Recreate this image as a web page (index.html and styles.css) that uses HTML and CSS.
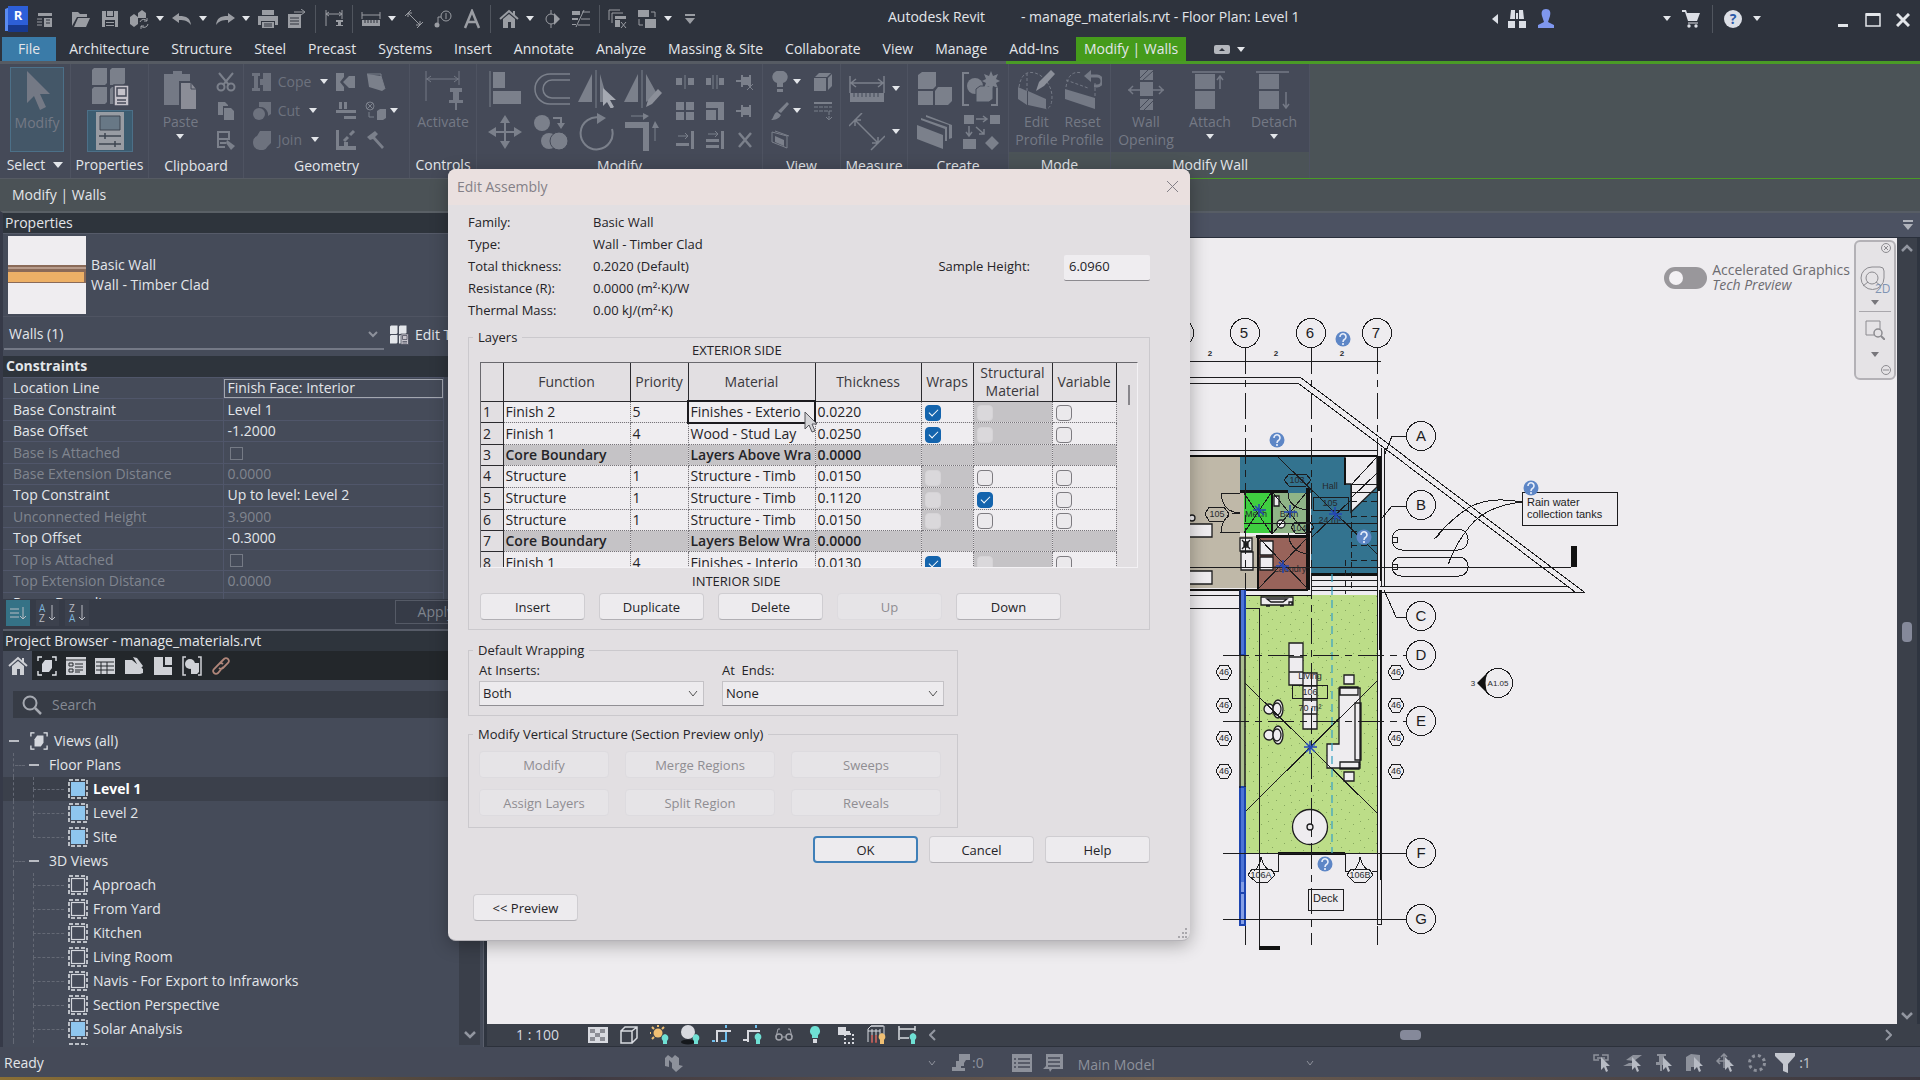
FILE: index.html
```html
<!DOCTYPE html>
<html lang="en">
<head>
    <meta charset="UTF-8">
    <meta name="viewport" content="width=device-width, initial-scale=1.0">
    <title>Autodesk Revit - manage_materials.rvt</title>
    <link rel="stylesheet" href="styles.css">
</head>
<body>
    <!-- Shared icons -->
    <svg class="defs" aria-hidden="true">
        <symbol id="view-on" viewBox="0 0 20 20"><rect x="3" y="3" width="14" height="14" fill="#8fc6ee"/><rect x="1" y="1" width="18" height="18" fill="none" stroke="#e4e7ec" stroke-width="1.5" stroke-dasharray="4 2"/></symbol>
        <symbol id="view-off" viewBox="0 0 20 20"><rect x="3.5" y="3.5" width="13" height="13" fill="none" stroke="#d4d7dd" stroke-width="1.2"/><rect x="1" y="1" width="18" height="18" fill="none" stroke="#e4e7ec" stroke-width="1.5" stroke-dasharray="4 2"/></symbol>
        <symbol id="views" viewBox="0 0 20 20"><path d="M1 5V1h4M15 1h4v4M19 15v4h-4M5 19H1v-4" fill="none" stroke="#e4e7ec" stroke-width="1.4"/><path d="M5 8l3-4h7v8l-3 4H5z" fill="#d4d7dd"/></symbol>
        <symbol id="house" viewBox="0 0 20 20"><path d="M1 10L10 2l9 8M15 6V2" fill="none" stroke="currentColor" stroke-width="2"/><path d="M4 10l6-5 6 5v9h-4v-6H9v6H4z" fill="currentColor"/></symbol>
        <symbol id="types" viewBox="0 0 40 40"><path d="M2 3l2-2h13v15l-2 2H2zM20 3l2-2h13v15l-2 2H20zM2 22l2-2h13v15l-2 2H2zM20 22l2-2h12v17H20z" fill="currentColor"/><rect x="24" y="18" width="15" height="21" fill="#c5c2ca" stroke="#454a58" stroke-width="1.5"/><path d="M27 21h9v8h-9zM27 33h9M27 36h9" stroke="#454a58" stroke-width="1.5" fill="none"/></symbol>
        <symbol id="q" viewBox="0 0 16 16"><circle cx="8" cy="8" r="7.5" fill="#5d86c6"/><path d="M5 6a3 3 0 115 2q-2 1-2 3M8 12v2" fill="none" stroke="#e8eefa" stroke-width="1.6"/></symbol>
        <symbol id="pick" viewBox="0 0 20 20"><path d="M9 4v13l3-3 2 5 2-1-2-5h4z" fill="#b7bbc4"/></symbol>
    </svg>

    <header class="titlebar">
        <svg class="logo" width="23" height="26" viewBox="0 0 23 26"><path d="M0 3l5-2v24H0z" fill="#5a8bf0"/><path d="M3 0h20v19H3z" fill="#2d5fd8"/><path d="M3 19h20v7H3z" fill="#17398f"/><text x="13" y="14" text-anchor="middle" font-size="13" font-weight="bold" fill="#fff">R</text></svg>
        <div class="quick">
            <button class="qb" aria-label="Home"><svg width="18" height="18" viewBox="0 0 18 18"><path d="M2 3h14v3H2zM8 8h8v9H8z"/><path class="ln" d="M1 9h5M1 12h5M1 15h5"/><path d="M10 10h4M10 13h4" stroke="#2e333d"/></svg></button>
            <button class="qb first" aria-label="Open"><svg width="20" height="18" viewBox="0 0 20 18"><path d="M1 2h6l2 2h7v3H6L1 16zM7 8h12l-4 9H3z"/></svg></button>
            <button class="qb" aria-label="Save"><svg width="18" height="18" viewBox="0 0 18 18"><path d="M1 1h16v16H1z"/><path d="M5 1h8v6H5zM4 10h10v7H4z" fill="#2e333d"/><path d="M6 1h6v5H6zM5 12h8v1H5zM5 15h8v1H5z"/></svg></button>
            <button class="qb" aria-label="Synchronize"><svg width="20" height="20" viewBox="0 0 20 20"><path d="M1 8l4-3 4 3v7l-4 3-4-3zM9 4l4-3 4 3v5H9z"/><path class="ln" d="M11 13a4 4 0 017-1M19 15a4 4 0 01-7 2M18 9v3h-3M12 20v-3h3"/></svg></button>
            <button class="caret" aria-label="Synchronize options"></button>
            <button class="qb" aria-label="Undo"><svg width="20" height="14" viewBox="0 0 20 14"><path d="M0 6l7-5v3c8 0 11 2 12 9-3-4-6-5-12-5v3z"/></svg></button>
            <button class="caret" aria-label="Undo list"></button>
            <button class="qb" aria-label="Redo"><svg width="20" height="14" viewBox="0 0 20 14"><path d="M20 6l-7-5v3C5 4 2 6 1 13c3-4 6-5 12-5v3z"/></svg></button>
            <button class="caret" aria-label="Redo list"></button>
            <button class="qb" aria-label="Print"><svg width="20" height="20" viewBox="0 0 20 20"><path d="M4 1h12v5H4zM0 7h20v9h-3v-4H3v4H0zM4 13h12v6H4z"/><path d="M6 15h8M6 17h8" stroke="#2e333d"/></svg></button>
            <button class="qb" aria-label="PDF"><svg width="20" height="20" viewBox="0 0 20 20"><path d="M1 5h13v14H1z"/><path d="M3 9h9M3 12h9M3 15h9" stroke="#2e333d"/><path class="ln" d="M7 3h10M14 0l4 3-4 3"/></svg></button>
            <span class="sep"></span>
            <button class="qb" aria-label="Reveal constraints"><svg width="20" height="20" viewBox="0 0 20 20"><path class="ln" d="M2 1v16M18 1v9M2 5h16M5 3L2 5l3 2M15 3l3 2-3 2"/><path d="M12 11h7v2h-2v3h2v1h-7v-1h2v-3h-2z"/></svg></button>
            <span class="sep"></span>
            <button class="qb" aria-label="Measure"><svg width="20" height="16" viewBox="0 0 20 16"><path class="ln" d="M1 1v7M19 1v7M1 4h18"/><path d="M1 9h18v6H1z"/><path d="M4 9v3M7 9v3M10 9v3M13 9v3M16 9v3" stroke="#2e333d"/></svg></button>
            <button class="caret" aria-label="Measure options"></button>
            <button class="qb" aria-label="Aligned dimension"><svg width="20" height="20" viewBox="0 0 20 20"><path class="ln" d="M1 7l6-6M13 19l6-6M4 4l12 12M4 8V4h4M16 12v4h-4"/></svg></button>
            <button class="qb" aria-label="Tag"><svg width="18" height="18" viewBox="0 0 18 18"><circle class="ln" cx="12" cy="6" r="5"/><path class="ln" d="M7 7H4v6M12 3v6"/><circle cx="3" cy="15" r="2.5"/></svg></button>
            <button class="qb" aria-label="Text"><svg width="18" height="20" viewBox="0 0 18 20"><path class="ln" stroke-width="2.5" d="M2 19L9 2l7 17M5 13h8"/></svg></button>
            <span class="sep"></span>
            <button class="qb" aria-label="Default 3D view"><svg width="20" height="20"><use href="#house"/></svg></button>
            <button class="caret" aria-label="3D options"></button>
            <button class="qb" aria-label="Section"><svg width="18" height="20" viewBox="0 0 18 20"><circle class="ln" cx="8" cy="10" r="5"/><path class="ln" d="M8 1v4M8 15v4"/><path d="M11 4l6 6-6 6z"/></svg></button>
            <button class="qb" aria-label="Thin lines"><svg width="20" height="18" viewBox="0 0 20 18"><path d="M1 1h8v4H1zM1 8h6v2H1zM1 14h4v1H1z"/><path class="ln" d="M11 2h8M10 9h9M7 15h12M13 0L5 17"/></svg></button>
            <span class="sep"></span>
            <button class="qb" aria-label="Close inactive"><svg width="20" height="20" viewBox="0 0 20 20"><path class="ln" d="M1 11V1h11M4 14V4h11"/><path d="M7 7h11v3H7zM7 11h5v7H7z"/><path class="ln" d="M13 13l5 6M18 13l-5 6"/></svg></button>
            <button class="qb" aria-label="Switch windows"><svg width="20" height="20" viewBox="0 0 20 20"><path d="M1 1h11v7H1zM8 10h11v9H8z"/><path class="ln" d="M14 3h4v5M2 10v6h4"/></svg></button>
            <button class="caret" aria-label="Windows list"></button>
            <button class="qb custom" aria-label="Customize"><svg width="10" height="10" viewBox="0 0 10 10"><path d="M0 0h10v2H0zM0 4h10L5 10z"/></svg></button>
        </div>
        <div class="window-title"><span>Autodesk Revit</span><span>- manage_materials.rvt - Floor Plan: Level 1</span></div>
        <div class="account">
            <button aria-label="Collapse search"><svg width="6" height="10" viewBox="0 0 6 10"><path d="M6 0v10L0 5z"/></svg></button>
            <button class="binoculars" aria-label="Search"><svg width="18" height="18" viewBox="0 0 18 18"><path d="M3 0h4v9H2zM11 0h4l1 9h-5zM0 11h7v7H0zM11 11h7v7h-7zM8 3h2v6H8z"/></svg></button>
            <button class="user" aria-label="Sign in"><svg width="18" height="20" viewBox="0 0 18 20"><path d="M9 0c4 0 5 3 4 7l-2 6 6 3v3H1v-3l6-3-2-6C4 3 5 0 9 0z"/></svg></button>
            <button class="caret" aria-label="Account"></button>
            <button class="cart" aria-label="App store"><svg width="18" height="18" viewBox="0 0 18 18"><path d="M0 0h4l1 3h13l-3 8H6L3 2H0z"/><path class="ln" d="M6 13h10"/><circle cx="7" cy="16" r="1.7"/><circle cx="14" cy="16" r="1.7"/></svg></button>
            <span class="sep"></span>
            <button class="help" aria-label="Help"><svg width="18" height="18" viewBox="0 0 18 18"><circle cx="9" cy="9" r="9"/><text x="9" y="14" text-anchor="middle" font-size="14" font-weight="bold" fill="#2d5aa8">?</text></svg></button>
            <button class="caret" aria-label="Help options"></button>
        </div>
        <div class="window-buttons">
            <button aria-label="Minimize"><svg width="14" height="14" viewBox="0 0 14 14"><path d="M2 11h10v3H2z"/></svg></button>
            <button aria-label="Maximize"><svg width="16" height="14" viewBox="0 0 16 14"><path class="ln" stroke-width="1.5" d="M1 1h14v12H1z"/><path d="M1 0h14v3H1z"/></svg></button>
            <button aria-label="Close"><svg width="14" height="14" viewBox="0 0 14 14"><path class="ln" stroke-width="3" d="M1 1l12 12M13 1L1 13"/></svg></button>
        </div>
    </header>

    <nav class="tabs">
        <a href="#" class="file">File</a>
        <a href="#">Architecture</a>
        <a href="#">Structure</a>
        <a href="#">Steel</a>
        <a href="#">Precast</a>
        <a href="#">Systems</a>
        <a href="#">Insert</a>
        <a href="#">Annotate</a>
        <a href="#">Analyze</a>
        <a href="#">Massing &amp; Site</a>
        <a href="#">Collaborate</a>
        <a href="#">View</a>
        <a href="#">Manage</a>
        <a href="#">Add-Ins</a>
        <a href="#" class="active">Modify | Walls</a>
        <button class="minimize" aria-label="Minimize ribbon"><svg width="16" height="9" viewBox="0 0 16 9"><rect width="16" height="9" rx="2"/><path d="M5 6h6L8 3z" fill="#2e333d"/></svg></button>
        <button class="caret" aria-label="Ribbon options"></button>
    </nav>

    <div class="ribbon">
        <section class="panel p-select">
            <div class="panel-body">
                <button class="big selected"><svg width="40" height="40" viewBox="0 0 40 40"><path d="M10 0v32l7-7 6 14 6-3-6-13h10z"/></svg><span>Modify</span></button>
            </div>
            <h2>Select <i class="tri"></i></h2>
        </section>
        <section class="panel p-props">
            <div class="panel-body stack">
                <button aria-label="Type properties"><svg width="40" height="40"><use href="#types"/></svg></button>
                <button class="lit" aria-label="Properties"><svg width="30" height="38" viewBox="0 0 30 38"><path d="M1 0h28v38H1z" fill="#989ca3"/><path d="M5 4h20v14H5z" fill="#687886" stroke="#3c4450"/><path d="M4 24h22M4 32h22M10 21v6M20 29v6" stroke="#3c4450" stroke-width="1.5"/></svg></button>
            </div>
            <h2>Properties</h2>
        </section>
        <section class="panel p-clip">
            <div class="panel-body">
                <button class="big"><svg width="34" height="40" viewBox="0 0 34 40"><path d="M1 4h9V1h9v3h8v7H16v24H1z"/><path d="M18 13h10l5 6v20H18z" fill="#8b8d97"/><path d="M28 12v7h6" fill="none" stroke="#454a58"/></svg><span>Paste</span><i class="caret"></i></button>
                <div class="small-grid one">
                    <button aria-label="Cut"><svg width="20" height="20" viewBox="0 0 20 20"><path class="ln" stroke-width="2" d="M3 1l10 12M17 1L7 13"/><circle class="ln" stroke-width="2" cx="5" cy="15" r="3.5"/><circle class="ln" stroke-width="2" cx="15" cy="15" r="3.5"/></svg></button>
                    <button aria-label="Copy"><svg width="20" height="20" viewBox="0 0 20 20"><path d="M2 1h7l3 3v1H7v9H2zM8 7h7l3 3v9H8z"/></svg></button>
                    <button aria-label="Match type"><svg width="20" height="20" viewBox="0 0 20 20"><path class="ln" stroke-width="2" d="M2 2h11v7H2zM2 9v8h7M4 13h6"/><path d="M11 10l8 6-4 4-5-7z"/></svg></button>
                </div>
            </div>
            <h2>Clipboard</h2>
        </section>
        <section class="panel p-geo">
            <div class="panel-body">
                <div class="geo-list">
                    <button><svg width="20" height="20" viewBox="0 0 20 20"><path d="M0 1h8v3H6v12h2v3H0v-3h2V4H0zM11 1h8v18h-8v-6h-3V7h3z"/></svg>Cope<i class="caret"></i></button>
                    <button><svg width="20" height="20" viewBox="0 0 20 20"><path d="M7 1h12v12l-3 2a8 8 0 00-9-9z"/><circle cx="7" cy="13" r="6"/></svg>Cut<i class="caret"></i></button>
                    <button><svg width="20" height="20" viewBox="0 0 20 20"><path d="M8 1h11v12l-3 3a8 8 0 01-15-4 7 7 0 014-6z"/></svg>Join<i class="caret"></i></button>
                </div>
                <div class="small-grid two">
                    <button aria-label="Join end"><svg width="20" height="20" viewBox="0 0 20 20"><path d="M0 1h8v4l-4 5 4 5v4H0zM7 10l6-6h6v12h-6z"/></svg></button>
                    <button aria-label="Wall joins"><svg width="20" height="20" viewBox="0 0 20 20"><path d="M1 2l14 2 4 13-3 2L3 15z"/><path class="ln" d="M1 2h14v2M15 4l4 13"/></svg></button>
                    <button aria-label="Beam joins"><svg width="20" height="20" viewBox="0 0 20 20"><path d="M0 9h20v3H0zM8 15h12v3H8zM3 1h3v7H3zM8 1h3v7H8z"/></svg></button>
                    <button class="with-caret" aria-label="Paint"><svg width="22" height="20" viewBox="0 0 22 20"><circle class="ln" cx="5" cy="5" r="4"/><path class="ln" d="M2 2l6 6M8 2L2 8M4 11v5h5"/><path d="M12 10l3-2h6v9l-3 2h-6z"/></svg><i class="caret"></i></button>
                    <button aria-label="Split face"><svg width="20" height="20" viewBox="0 0 20 20"><path d="M0 0h3v16h17v4H0zM8 12h4v4H8z"/><path class="ln" stroke-width="3" d="M8 11l4-4M14 5l4-4"/></svg></button>
                    <button aria-label="Demolish"><svg width="20" height="20" viewBox="0 0 20 20"><path d="M1 7l8-6 3 3-3 3 9 10-2 2L7 9 4 10z"/></svg></button>
                </div>
            </div>
            <h2>Geometry</h2>
        </section>
        <section class="panel p-ctrl">
            <div class="panel-body">
                <button class="big"><svg width="40" height="40" viewBox="0 0 40 40"><path class="ln" d="M3 1v30M36 1v14M3 9h33M8 6L4 9l4 3M31 6l4 3-4 3"/><path d="M27 18h12v4h-3v8h4v3H26v-3h4v-8h-3zM32 33h2v7h-2z"/></svg><span>Activate</span></button>
            </div>
            <h2>Controls</h2>
        </section>
        <section class="panel p-modify">
            <div class="panel-body">
                <div class="tool-grid">
                    <button aria-label="Align"><svg width="34" height="36" viewBox="0 0 34 36"><path class="ln" d="M2 0v36"/><path d="M5 1h12v16H5zM5 20h28v13H5z"/></svg></button>
                    <button aria-label="Offset"><svg width="38" height="34" viewBox="0 0 38 34"><path class="ln" stroke-width="1.5" d="M38 2H18a15 15 0 000 30h20M38 8H20a9 9 0 000 18h18"/></svg></button>
                    <button aria-label="Mirror pick axis"><svg width="38" height="38" viewBox="0 0 38 38"><path class="ln" d="M18 0v38"/><path d="M14 4v28H0zM22 4v28h8z"/><path d="M25 18v18l4-4 4 7 3-2-4-7h6z" fill="#a5a9b2"/></svg></button>
                    <button aria-label="Mirror draw axis"><svg width="38" height="38" viewBox="0 0 38 38"><path class="ln" d="M18 0v38"/><path d="M14 4v28H0zM22 4v28l11-8z"/><path d="M22 37l2-7 10-11 4 4-10 11z" fill="#8b8f99"/></svg></button>
                    <button aria-label="Move"><svg width="34" height="34" viewBox="0 0 34 34"><path class="ln" stroke-width="2" d="M17 4v26M4 17h26"/><path d="M17 0l5 8H12zM17 34l5-8H12zM0 17l8-5v10zM34 17l-8-5v10z"/></svg></button>
                    <button aria-label="Copy element"><svg width="36" height="36" viewBox="0 0 36 36"><circle cx="9" cy="9" r="8"/><circle cx="16" cy="27" r="8"/><circle cx="26" cy="27" r="9" stroke="#454a58"/><path class="ln" stroke-width="2" d="M20 4h8v6"/><path d="M24 9h8l-4 6z"/></svg></button>
                    <button aria-label="Rotate"><svg width="36" height="38" viewBox="0 0 36 38"><path class="ln" stroke-width="2" d="M22 5A16 16 0 1033 16"/><path d="M18 0l9 5-9 6z"/></svg></button>
                    <button aria-label="Trim corner"><svg width="36" height="38" viewBox="0 0 36 38"><path d="M0 9h24v29h-6V15H0z"/><path class="ln" d="M6 3h16M30 12v16"/><path d="M18 0l6 3-6 4zM27 15l3-7 4 7z"/></svg></button>
                </div>
                <div class="small-grid three">
                    <button aria-label="Split"><svg width="20" height="14" viewBox="0 0 20 14"><path d="M1 3h6v7H1zM13 3h6v7h-6z"/><path class="ln" d="M10 0v14"/></svg></button>
                    <button aria-label="Split with gap"><svg width="20" height="14" viewBox="0 0 20 14"><path d="M1 3h5v7H1zM14 3h5v7h-5z"/><path class="ln" d="M8 0v14M12 0v14"/></svg></button>
                    <button aria-label="Unpin"><svg width="18" height="18" viewBox="0 0 18 18"><path d="M0 7h5V2h2v2h6V2h2v12h-2v-2H7v2H5V9H0z"/><path class="ln" d="M11 11l6 6M17 11l-6 6"/></svg></button>
                    <button aria-label="Array"><svg width="20" height="20" viewBox="0 0 20 20"><path d="M1 1h8v8H1zM11 1h8v8h-8zM1 11h8v8H1zM11 11h8v8h-8z"/></svg></button>
                    <button aria-label="Scale"><svg width="20" height="20" viewBox="0 0 20 20"><path d="M1 1h18v18h-6V7H1zM1 9h10v10H1z"/></svg></button>
                    <button aria-label="Pin"><svg width="18" height="14" viewBox="0 0 18 14"><path d="M0 6h5V1h2v2h6V1h2v12h-2v-2H7v2H5V8H0z"/></svg></button>
                    <button aria-label="Trim single"><svg width="20" height="20" viewBox="0 0 20 20"><path d="M16 1h3v18h-3zM1 13h13v3H1z"/><path class="ln" d="M3 6h10M10 3l3 3-3 3"/></svg></button>
                    <button aria-label="Trim multiple"><svg width="20" height="20" viewBox="0 0 20 20"><path d="M16 1h3v18h-3zM1 9h13v3H1zM1 15h13v3H1z"/><path class="ln" d="M3 4h10M10 1l3 3-3 3"/></svg></button>
                    <button aria-label="Delete"><svg width="18" height="18" viewBox="0 0 18 18"><path class="ln" stroke-width="2.5" d="M3 2l12 14M15 2L3 16"/></svg></button>
                </div>
            </div>
            <h2>Modify</h2>
        </section>
        <section class="panel p-view">
            <div class="panel-body">
                <div class="view-grid">
                    <button aria-label="Hide"><svg width="20" height="22" viewBox="0 0 20 22"><path d="M10 0a6 6 0 013 12v4H7v-4a6 6 0 013-12zM7 18h6v3H7z"/></svg><i class="caret"></i></button>
                    <button aria-label="Displace"><svg width="20" height="20" viewBox="0 0 20 20"><path d="M1 6h12v13H1zM2 5l4-4h12l-4 4zM15 6l4-4v12l-4 4z"/></svg></button>
                    <button aria-label="Override"><svg width="20" height="20" viewBox="0 0 20 20"><path d="M17 1l2 2-8 9-3-2zM7 11l4 3c-2 4-6 5-10 5 3-2 2-6 6-8z"/></svg><i class="caret"></i></button>
                    <button aria-label="Linework"><svg width="20" height="20" viewBox="0 0 20 20"><path class="ln" stroke-width="2" d="M1 2h18"/><path class="ln" d="M1 6h18M1 10h18M16 10v9M13 16l3 3 3-3" stroke-dasharray="4 1"/></svg></button>
                    <button aria-label="Selection box"><svg width="20" height="20" viewBox="0 0 20 20"><path class="ln" d="M2 2l15 4v12L2 12zM5 1l14 5"/><path d="M5 6l9 4v6l-9-4z"/></svg><i class="caret none"></i></button>
                </div>
            </div>
            <h2>View</h2>
        </section>
        <section class="panel p-measure">
            <div class="panel-body">
                <div class="measure-list">
                    <button aria-label="Measure between"><svg width="36" height="30" viewBox="0 0 36 30"><path class="ln" stroke-width="1.5" d="M1 2v17M35 2v17M2 9h32M7 5L2 9l5 4M29 5l5 4-5 4"/><path d="M1 19h34v9H1z"/><path stroke="#454a58" d="M5 19v4M9 19v4M13 19v4M17 19v4M21 19v4M25 19v4M29 19v4"/></svg><i class="caret"></i></button>
                    <button aria-label="Dimension"><svg width="36" height="38" viewBox="0 0 36 38"><path class="ln" stroke-width="1.5" d="M0 13L13 0M22 37l14-14M6 7l23 23M6 13V7h6M29 24v6h-6"/></svg><i class="caret"></i></button>
                </div>
            </div>
            <h2>Measure</h2>
        </section>
        <section class="panel p-create">
            <div class="panel-body">
                <div class="tool-grid pair">
                    <button aria-label="Create assembly"><svg width="36" height="36" viewBox="0 0 36 36"><path d="M1 4l4-3h14v14l-3 3H1zM1 20h15v14H1zM18 20l3-4h14v14l-4 4H18z"/></svg></button>
                    <button aria-label="Create group"><svg width="38" height="36" viewBox="0 0 38 36"><path class="ln" stroke-width="2" d="M7 2H1v32h6M29 34h6V17"/><circle cx="13" cy="15" r="8"/><path d="M14 18l4-3h13v13l-4 3H14z" stroke="#454a58"/><path d="M29 0l2 5 5-2-2 5 4 2-4 2 2 5-5-2-2 5-2-5-5 2 2-5-4-2 4-2-2-5 5 2z"/></svg></button>
                    <button aria-label="Create parts"><svg width="38" height="36" viewBox="0 0 38 36"><path d="M1 11l26 10v14L1 25zM5 6l24 9v12h2V13L5 4zM10 1l26 10v13l-3 1V11L10 3z"/></svg></button>
                    <button aria-label="Create similar"><svg width="38" height="36" viewBox="0 0 38 36"><path d="M2 1h10v9H2zM28 1h10v9H28zM1 25h13v10H1zM30 22l7 7-7 7-7-7z"/><path class="ln" stroke-width="1.5" d="M14 5h11M21 2l4 3-4 3M7 12v10M4 18l3 4 3-4M14 13l8 7M17 20h5v-5"/></svg></button>
                </div>
            </div>
            <h2>Create</h2>
        </section>
        <section class="panel p-mode olive">
            <div class="panel-body">
                <button class="big"><svg width="38" height="40" viewBox="0 0 38 40"><path d="M1 17l9 4v14l-9-6zM11 21l18 8v10l-18-4z"/><path class="ln" stroke-dasharray="3 2" d="M2 17C4 4 10 1 18 3s17 12 17 24-6 12-6 12M10 21V3"/><path d="M19 21l3-9L34 0l4 4-11 12z" fill="#8b8f99"/></svg><span>Edit<br>Profile</span></button>
                <button class="big"><svg width="38" height="40" viewBox="0 0 38 40"><path d="M1 19l30 9v11L1 29z"/><path class="ln" stroke-dasharray="3 2" d="M2 17C4 4 10 1 18 3M31 26V12M2 10l22 8"/><path class="ln" stroke-width="3" d="M24 6h9a4 4 0 010 10h-3"/><path d="M20 6l7-6v12z"/></svg><span>Reset<br>Profile</span></button>
            </div>
            <h2>Mode</h2>
        </section>
        <section class="panel p-wall olive">
            <div class="panel-body">
                <button class="big"><svg width="36" height="40" viewBox="0 0 36 40"><path d="M12 0h13v10H12zM12 12h13v14H12zM12 29h13v11H12z"/><path stroke="#454a58" d="M12 8l8-8M15 10l10-9M12 38l9-9M16 40l9-9"/><path class="ln" stroke-width="1.5" d="M0 20h36M5 16l-4 4 4 4M31 16l4 4-4 4"/></svg><span>Wall<br>Opening</span></button>
                <button class="big"><svg width="36" height="40" viewBox="0 0 36 40"><path d="M3 4h20v15H3zM3 21h20v18H3z"/><path class="ln" stroke-width="1.5" d="M0 2h33M28 6v13M25 10l3-4 3 4"/></svg><span>Attach</span><i class="caret"></i></button>
                <button class="big"><svg width="36" height="40" viewBox="0 0 36 40"><path d="M3 4h20v15H3zM3 21h20v18H3z"/><path class="ln" stroke-width="1.5" d="M0 2h33M30 22v16M27 34l3 4 3-4"/></svg><span>Detach</span><i class="caret"></i></button>
            </div>
            <h2>Modify Wall</h2>
        </section>
    </div>

    <div class="options">Modify | Walls</div>

    <main class="main">
        <aside class="palettes">
            <h2 class="palette-title">Properties</h2>
            <div class="type-block">
                <svg width="78" height="78" viewBox="0 0 78 78"><path d="M0 0h78v78H0z" fill="#efedf0"/><path d="M0 29h78v18H0z" fill="#8a6a58"/><path d="M0 31h78v2H0z" fill="#b79b8b"/><path d="M0 36h76v10H0z" fill="#edb066"/></svg>
                <p>Basic Wall<br>Wall - Timber Clad</p>
            </div>
            <div class="filter-row">
                <button class="filter">Walls (1) <svg width="10" height="7" viewBox="0 0 10 7"><path class="ln" stroke-width="2" d="M1 1l4 4 4-4"/></svg></button>
                <button class="edit-type"><svg width="20" height="20"><use href="#types"/></svg>Edit Type</button>
            </div>
            <h3 class="group-title">Constraints</h3>
            <div class="props">
                <table>
                    <tr><th>Location Line</th><td class="focus">Finish Face: Interior</td></tr>
                    <tr><th>Base Constraint</th><td>Level 1</td></tr>
                    <tr><th>Base Offset</th><td>-1.2000</td></tr>
                    <tr class="off"><th><label for="base-attached">Base is Attached</label></th><td><input type="checkbox" id="base-attached" disabled></td></tr>
                    <tr class="off"><th>Base Extension Distance</th><td>0.0000</td></tr>
                    <tr><th>Top Constraint</th><td>Up to level: Level 2</td></tr>
                    <tr class="off"><th>Unconnected Height</th><td>3.9000</td></tr>
                    <tr><th>Top Offset</th><td>-0.3000</td></tr>
                    <tr class="off"><th><label for="top-attached">Top is Attached</label></th><td><input type="checkbox" id="top-attached" disabled></td></tr>
                    <tr class="off"><th>Top Extension Distance</th><td>0.0000</td></tr>
                    <tr><th>Room Bounding</th><td></td></tr>
                </table>
            </div>
            <div class="sort-row">
                <button class="on" aria-label="Default order"><svg width="18" height="18" viewBox="0 0 18 18"><path class="ln" d="M1 5h9M1 9h9M1 13h9M14 3v12M11 12l3 3 3-3"/></svg></button>
                <button aria-label="A to Z"><svg width="18" height="20" viewBox="0 0 18 20"><text x="1" y="9" font-size="10" fill="#7db4da">A</text><text x="1" y="19" font-size="10">Z</text><path class="ln" d="M14 2v15M11 14l3 3 3-3"/></svg></button>
                <button aria-label="Z to A"><svg width="18" height="20" viewBox="0 0 18 20"><text x="1" y="9" font-size="10">Z</text><text x="1" y="19" font-size="10" fill="#7db4da">A</text><path class="ln" d="M14 2v15M11 14l3 3 3-3"/></svg></button>
                <button class="apply" disabled>Apply</button>
            </div>
            <h2 class="palette-title">Project Browser - manage_materials.rvt</h2>
            <div class="browser-tabs">
                <button class="on" aria-label="All"><svg width="20" height="20"><use href="#house"/></svg></button>
                <button aria-label="Views"><svg width="20" height="20"><use href="#views"/></svg></button>
                <button aria-label="Legends"><svg width="20" height="20" viewBox="0 0 20 20"><path d="M0 1h20v18H0z"/><path stroke="#23272b" fill="none" d="M0 4h20M3 7h4v3H3zM3 13h4v3H3zM9 8h8M9 11h8M9 14h8M9 16h5"/></svg></button>
                <button aria-label="Schedules"><svg width="20" height="16" viewBox="0 0 20 16"><path d="M0 0h20v16H0z"/><path stroke="#23272b" d="M1 4h18M1 8h18M1 12h18M6 4v12M12 4v12"/></svg></button>
                <button aria-label="Sheets"><svg width="20" height="18" viewBox="0 0 20 18"><path d="M1 3h7l11 9v4l-3 1H1zM9 0l4 1 6 8-3 3z"/></svg></button>
                <button aria-label="Families"><svg width="18" height="18" viewBox="0 0 18 18"><path d="M0 0h9v10h9v8H0zM11 0h7v8h-7z"/></svg></button>
                <button aria-label="Groups"><svg width="20" height="20" viewBox="0 0 20 20"><path class="ln" stroke-width="1.5" d="M4 1H1v18h3M16 1h3v18h-3"/><circle cx="8" cy="8" r="5"/><path d="M9 10l3-3h5v9l-2 2H9z"/></svg></button>
                <button class="link" aria-label="Links"><svg width="20" height="18" viewBox="0 0 20 18"><path class="ln" stroke-width="1.8" d="M8 7l5-5a3 3 0 014 0 3 3 0 010 4l-5 5a3 3 0 01-4 0M12 10l-5 6a3 3 0 01-4 0 3 3 0 010-4l5-5a3 3 0 014 0"/></svg></button>
            </div>
            <div class="search">
                <svg width="20" height="20" viewBox="0 0 20 20"><circle class="ln" stroke-width="2" cx="8" cy="8" r="6.5"/><path class="ln" stroke-width="2.5" d="M13 13l6 6"/></svg>
                <input type="text" placeholder="Search" aria-label="Search">
            </div>
            <div class="browser">
                <ul class="tree">
                    <li class="root"><i class="minus"></i><svg width="18" height="18"><use href="#views"/></svg>Views (all)</li>
                    <li class="group"><i class="minus"></i>Floor Plans</li>
                    <li class="leaf current"><svg width="20" height="20"><use href="#view-on"/></svg>Level 1</li>
                    <li class="leaf"><svg width="20" height="20"><use href="#view-on"/></svg>Level 2</li>
                    <li class="leaf"><svg width="20" height="20"><use href="#view-on"/></svg>Site</li>
                    <li class="group"><i class="minus"></i>3D Views</li>
                    <li class="leaf"><svg width="20" height="20"><use href="#view-off"/></svg>Approach</li>
                    <li class="leaf"><svg width="20" height="20"><use href="#view-off"/></svg>From Yard</li>
                    <li class="leaf"><svg width="20" height="20"><use href="#view-off"/></svg>Kitchen</li>
                    <li class="leaf"><svg width="20" height="20"><use href="#view-off"/></svg>Living Room</li>
                    <li class="leaf"><svg width="20" height="20"><use href="#view-off"/></svg>Navis - For Export to Infraworks</li>
                    <li class="leaf"><svg width="20" height="20"><use href="#view-off"/></svg>Section Perspective</li>
                    <li class="leaf"><svg width="20" height="20"><use href="#view-on"/></svg>Solar Analysis</li>
                    <li class="leaf"><svg width="20" height="20"><use href="#view-off"/></svg></li>
                </ul>
                <div class="browser-scroll"><svg width="12" height="8" viewBox="0 0 12 8"><path class="ln" stroke-width="2.5" d="M1 1l5 5 5-5"/></svg></div>
            </div>
        </aside>

        <div class="workspace">
            <div class="view-tabs"><svg width="10" height="10" viewBox="0 0 10 10"><path d="M0 0h10v2H0zM0 4h10L5 10z"/></svg></div>
            <div class="view-area">
                <div class="canvas">
                    <svg class="plan" viewBox="487 238 1410 786" preserveAspectRatio="xMinYMin meet">
                        <!-- Room fills -->
                        <path d="M1180 457h60v131h-60zM1220 493h24v40h-24zM1240 536h17v52h-17z" fill="#bfb8a8"/>
                        <path d="M1240 456h105v28h6v28l26-25v87h-66V493h-71z" fill="#33738f"/>
                        <path d="M1244 493h27v40h-27z" fill="#3fcf40"/>
                        <path d="M1273 493h35v40h-35z" fill="#8fb487"/>
                        <path d="M1258 537h50v52h-50z" fill="#98635a"/>
                        <pattern id="grass" width="23" height="19" patternUnits="userSpaceOnUse"><path d="M0 0h23v19H0z" fill="#bcdd88"/><path d="M3 4h1v1H3zM11 2h1v1h-1zM19 7h1v1h-1zM7 11h1v1H7zM15 14h1v1h-1zM2 16h1v1H2z" fill="#86a75f"/></pattern>
                        <path d="M1245 595h132v258h-132z" fill="url(#grass)"/>
                        <!-- Furniture -->
                        <g class="furn">
                            <path d="M1180 524h32v13h-32zM1180 571h32v13h-32z"/>
                            <path d="M1260 541h13v14h-13zM1260 557h13v13h-13zM1240 538h12v13h-12zM1241 552h12v18h-12z"/>
                            <path d="M1242 540l8 9M1250 540l-8 9M1244 542h4v5h-4z"/>
                            <path d="M1261 597h32v8h-32zM1267 599h20l-4 3h-12zM1266 606h4M1280 606h4M1289 602h3v3h-3z"/>
                            <path d="M1289 643h14v14h-14zM1289 657h14v15h-14zM1289 672h14v13h-14zM1303 673h14v13h-14zM1303 686h14v14h-14zM1303 700h14v14h-14zM1303 714h14v15h-14z"/>
                            <path d="M1344 675h10v9h-10zM1344 772h10v9h-10z"/>
                            <path d="M1339 688h21v80h-33v-24h12zM1340 687h18v8h-18zM1355 703h6v57h-6zM1340 762h19v7h-19z"/>
                            <circle cx="1310" cy="827" r="17.5"/><circle cx="1310" cy="827" r="3"/>
                            <circle cx="1269" cy="709" r="5"/><ellipse cx="1278" cy="709" rx="5" ry="9"/><ellipse cx="1277" cy="709" rx="4" ry="6"/>
                            <circle cx="1269" cy="735" r="5"/><ellipse cx="1278" cy="735" rx="5" ry="9"/><ellipse cx="1277" cy="735" rx="4" ry="6"/>
                            <path d="M1274 496h5v10h-5z"/><ellipse cx="1281" cy="524" rx="4" ry="4"/>
                            <path d="M1345 456h32v31l-26 25v-28h-6z"/>
                            <circle cx="1192" cy="518" r="3"/>
                        </g>
                        <!-- Walls -->
                        <path d="M1190 455h188v2h-188zM1377 456h4v35h-4zM1380 490h2v91h-2zM1379 590h3v60h-3zM1240 490h48v3h-48zM1271 493h2v41h-2zM1306 488h4v102h-4zM1256 535h52v3h-52zM1257 537h2v52h-2zM1311 573h67v3h-67zM1190 589h118v2h-118zM1245 595h66v1h-66zM1278 852h67v3h-67zM1344 458h2v27h-2zM1380 650h2v230h-2z"/>
                        <path class="pl" d="M1190 450h188M1351 484v28M1381 448v138M1384 448v138M1311 580h67M1311 586h67M1311 590h67M1190 595h50M1190 608h69v338M1377 490v434h4V591M1188 567h383M1190 361h191M1278 854v17h-5M1345 854v17h4M1377 871h-5"/>
                        <path class="pl" d="M1190 377h110l284 215h-204M1190 383h108l277 209M1380 586h187"/>
                        <path class="pl" d="M1351 485l26-28M1351 498l26-25M1351 484h26M1351 492h26"/>
                        <path class="pl" stroke-dasharray="6 4" d="M1351 512v78M1351 501h26M1351 516h26M1351 531h26M1351 545h26M1351 560h26M1345 560v34"/>
                        <!-- Room crosses -->
                        <path class="pl" d="M1278 457l99 97M1351 500l-40 38M1244 493l27 40M1271 493l-27 40M1273 493l33 40M1306 493l-33 40M1258 537l50 52M1308 537l-50 52M1245 683l132 130M1377 681l-132 131M1244 523h134"/>
                        <path class="pl" d="M1240 493h-19q1 12 8 17 6 3 11 3M1240 532h-19q1-13 8-16M1240 513h-8M1288 493q0 14 18 17M1288 533q2 19 20 21"/>
                        <!-- Selected wall -->
                        <path d="M1240 590h5v65h-5zM1240 787h5v95h-5z" fill="#4c74d6"/>
                        <path d="M1240 882h5v43h-5z" fill="#86a0e6"/>
                        <path d="M1240 655h5v132h-5z" fill="#a9bd8e"/>
                        <path class="pl blue" d="M1240 590v65h5v-65M1240 787h5v138h-5zM1240 893h5"/>
                        <path d="M1240 590v198M1245 655v132" stroke="#1c1c1e" stroke-width="1.5"/>
                        <path d="M1332 574v280" stroke="#3fa5c4" stroke-width="1.3" stroke-dasharray="8 5"/>
                        <!-- Grid lines -->
                        <g class="grid">
                            <path stroke-dasharray="26 6 7 6" d="M1245 348v242M1311 348v597M1377 348v110M1245 926v19M1377 926v19"/>
                            <path stroke-dasharray="26 6 7 6" d="M1223 655h184M1223 721h184"/>
                            <path d="M1223 853h184M1223 919h184M1384 456l8-20h15M1382 518l10-12h15M1384 590l12 27h11"/>
                            <circle cx="1179" cy="333" r="14.5"/><circle cx="1245" cy="333" r="14.5"/><circle cx="1311" cy="333" r="14.5"/><circle cx="1377" cy="333" r="14.5"/>
                            <circle cx="1421" cy="436" r="14.5"/><circle cx="1421" cy="505" r="14.5"/><circle cx="1421" cy="616" r="14.5"/><circle cx="1421" cy="655" r="14.5"/><circle cx="1421" cy="721" r="14.5"/><circle cx="1421" cy="853" r="14.5"/><circle cx="1421" cy="919" r="14.5"/>
                            <circle cx="1498" cy="683" r="14.5"/>
                        </g>
                        <g class="gt">
                            <text x="1244" y="338">5</text><text x="1310" y="338">6</text><text x="1376" y="338">7</text>
                            <text x="1421" y="441">A</text><text x="1421" y="510">B</text><text x="1421" y="621">C</text><text x="1421" y="660">D</text><text x="1421" y="726">E</text><text x="1421" y="858">F</text><text x="1421" y="924">G</text>
                        </g>
                        <path d="M1477 683l11-11q-5 11 0 22zM1571 546h6v21h-6zM1259 946h21v4h-21z"/>
                        <g class="tags">
                            <text x="1473" y="686" font-size="8">3</text><text x="1498" y="686" font-size="8">A1.05</text>
                            <text x="1210" y="356" font-size="8" font-weight="bold">2</text><text x="1276" y="356" font-size="8" font-weight="bold">2</text><text x="1342" y="356" font-size="8" font-weight="bold">2</text>
                        </g>
                        <!-- Window and door tags -->
                        <g class="hex">
                            <path d="M1216 672l4-7h8l4 7-4 7h-8zM1216 705l4-7h8l4 7-4 7h-8zM1216 738l4-7h8l4 7-4 7h-8zM1216 771l4-7h8l4 7-4 7h-8z"/>
                            <path d="M1388 672l4-7h8l4 7-4 7h-8zM1388 705l4-7h8l4 7-4 7h-8zM1388 738l4-7h8l4 7-4 7h-8zM1388 771l4-7h8l4 7-4 7h-8z"/>
                            <path d="M1248 875l4-6h19l4 6-7 7h-12zM1347 875l4-6h18l4 6-7 7h-12zM1205 514l4-7h15l5 7-5 7h-15zM1284 480l5-6h17l5 6-5 6h-17zM1291 527l4-5h15l4 5-4 6h-15z"/>
                            <path d="M1261 857q-1 9-7 14M1261 857q2 9 8 13M1360 857q-1 9-7 14M1360 857q2 9 8 13M1313 497h35v13h-35zM1292 685h35v13h-35zM1308 889h35v21h-35zM1522 492h95v33h-95z"/>
                            <rect x="1392" y="529" width="76" height="21" rx="10"/><rect x="1392" y="557" width="76" height="19" rx="9"/><circle cx="1395" cy="540" r="3"/><circle cx="1395" cy="567" r="3"/>
                            <path d="M1522 502q-32-6-52 5-18 11-34 30M1522 502q-36 4-52 24-16 20-21 37M1434 539l6-5M1448 564l3-7"/>
                        </g>
                        <g class="tags">
                            <text x="1224" y="675">46</text><text x="1224" y="708">46</text><text x="1224" y="741">46</text><text x="1224" y="774">46</text>
                            <text x="1396" y="675">46</text><text x="1396" y="708">46</text><text x="1396" y="741">46</text><text x="1396" y="774">46</text>
                            <text x="1261" y="878">106A</text><text x="1360" y="878">106B</text><text x="1217" y="517">105</text><text x="1297" y="483">103</text><text x="1299" y="531">104</text>
                            <text x="1330" y="489">Hall</text><text x="1330" y="506">105</text><text x="1330" y="523">24 m²</text>
                            <text x="1256" y="517">Mech</text><text x="1289" y="517">Bath</text><text x="1290" y="572">Laundry</text>
                            <text x="1310" y="679">Living</text><text x="1310" y="695">106</text><text x="1310" y="711">70 m²</text>
                        </g>
                        <g class="notes"><text x="1313" y="902">Deck</text><text x="1527" y="506">Rain water</text><text x="1527" y="518">collection tanks</text></g>
                        <path d="M1310 741v13M1304 747h13M1306 743l9 9M1315 743l-9 9M1259 504v13M1253 510h13M1255 506l9 9M1290 505v13M1284 512h13M1335 507v13M1329 514h13M1331 510l9 9M1283 560v13M1276 566h13M1279 562l9 9" stroke="#2447b5" stroke-width="1.5"/>
                        <use href="#q" x="1335" y="331" width="16" height="16"/><use href="#q" x="1269" y="432" width="16" height="16"/><use href="#q" x="1356" y="529" width="16" height="16"/><use href="#q" x="1523" y="480" width="16" height="16"/><use href="#q" x="1317" y="856" width="16" height="16"/>
                    </svg>
                    <label class="accel">
                        <input type="checkbox">
                        <span>Accelerated Graphics<br><em>Tech Preview</em></span>
                    </label>
                    <div class="navbar">
                        <button class="edge" aria-label="Close"><svg width="10" height="10" viewBox="0 0 10 10"><circle class="ln" cx="5" cy="5" r="4.5"/><path class="ln" d="M3 3l4 4M7 3L3 7"/></svg></button>
                        <button class="wheel" aria-label="Steering wheel"><svg width="30" height="28" viewBox="0 0 30 28"><path class="ln" d="M12 1h8q4 0 4 4v7a11 11 0 01-23 0A11 11 0 0112 1z"/><circle class="ln" cx="12" cy="12" r="6"/><path class="ln" d="M3 20l5-4M16 16l5 4"/><text x="15" y="27" font-size="12" fill="#7f94b3">2D</text></svg></button>
                        <i class="caret"></i>
                        <hr>
                        <button class="zoom" aria-label="Zoom"><svg width="20" height="20" viewBox="0 0 20 20"><path class="ln" d="M9 15H1V1h14v8"/><circle class="ln" stroke-width="1.5" cx="13" cy="13" r="4"/><path class="ln" stroke-width="2" d="M16 16l4 4"/></svg></button>
                        <i class="caret"></i>
                        <button class="edge" aria-label="Options"><svg width="10" height="10" viewBox="0 0 10 10"><circle class="ln" cx="5" cy="5" r="4.5"/><path class="ln" d="M2 5h6"/></svg></button>
                    </div>
                </div>
                <div class="vscroll">
                    <svg width="12" height="8" viewBox="0 0 12 8"><path class="ln" stroke-width="2.5" d="M1 7l5-5 5 5"/></svg>
                    <i class="thumb"></i>
                    <svg width="12" height="8" viewBox="0 0 12 8"><path class="ln" stroke-width="2.5" d="M1 1l5 5 5-5"/></svg>
                </div>
            </div>
            <div class="view-bar">
                <span class="scale">1 : 100</span>
                <button aria-label="Detail level"><svg width="20" height="16" viewBox="0 0 20 16"><path d="M0 0h20v16H0z"/><path d="M2 2h5v4H2zM12 2h5v4h-5zM7 6h5v4H7zM2 10h5v4H2zM12 10h5v4h-5z" fill="#8b8d95"/></svg></button>
                <button aria-label="Visual style"><svg width="18" height="18" viewBox="0 0 18 18"><path class="ln" stroke-width="1.5" d="M1 5h11v12H1zM1 5l4-4h12v11l-5 5M12 5l5-4"/></svg></button>
                <button aria-label="Sun path"><svg width="20" height="20" viewBox="0 0 20 20"><circle cx="8" cy="8" r="4.5" fill="#f0bf73"/><path d="M8 0v2M1 8H0M2 2l2 2M14 2l-2 2M2 14l2-2" stroke="#f0bf73" stroke-width="2"/><path d="M15 9a4 4 0 012 7v3h-4v-3a4 4 0 012-7z" fill="#6fe0d4"/></svg></button>
                <button aria-label="Shadows"><svg width="20" height="20" viewBox="0 0 20 20"><ellipse cx="7" cy="17" rx="7" ry="2.5" fill="#15181c"/><circle cx="7" cy="7" r="7"/><path d="M15 9a4 4 0 012 7v3h-4v-3a4 4 0 012-7z" fill="#6fe0d4"/></svg></button>
                <button aria-label="Crop view"><svg width="20" height="20" viewBox="0 0 20 20"><path class="ln" stroke-width="2" d="M5 17V6h14"/><path d="M14 0v3M14 7v9H9M0 16h3" stroke="#6fc0ee" stroke-width="2" fill="none"/></svg></button>
                <button aria-label="Crop region"><svg width="20" height="20" viewBox="0 0 20 20"><path class="ln" stroke-width="2" d="M5 17V6h12M0 15h4"/><path d="M13 0v3" stroke="#6fc0ee" stroke-width="2"/><path d="M15 8a4 4 0 012 7v4h-4v-4a4 4 0 012-7z" fill="#6fe0d4"/></svg></button>
                <button class="dim" aria-label="Hide isolate"><svg width="18" height="14" viewBox="0 0 18 14"><circle class="ln" stroke-width="1.5" cx="4" cy="9" r="3"/><circle class="ln" stroke-width="1.5" cx="14" cy="9" r="3"/><path class="ln" d="M1 9l2-8h2M17 9l-2-8h-2M7 9h4"/></svg></button>
                <button aria-label="Reveal hidden"><svg width="14" height="18" viewBox="0 0 14 18"><path d="M7 0a5 5 0 013 9v3H4V9a5 5 0 013-9z" fill="#6fe0d4"/><path d="M5 13h4v4H5z"/></svg></button>
                <button aria-label="Temporary properties"><svg width="18" height="18" viewBox="0 0 18 18"><path d="M1 1h8v8H1zM5 5h8v4H5z"/><path class="ln" stroke-dasharray="2 2" stroke-width="2" d="M8 8h8v9H8z"/></svg></button>
                <button aria-label="Analytical model"><svg width="20" height="20" viewBox="0 0 20 20"><path class="ln" d="M1 17V4l3-3h13v12M1 6h12M5 4v13M9 4v13M13 4v9M4 1h12"/><path d="M5 10v8M9 10v8" stroke="#c0504a" stroke-width="1.5"/><path d="M15 8a4 4 0 012 7v4h-4v-4a4 4 0 012-7z" fill="#f0bf73"/></svg></button>
                <button aria-label="Constraints"><svg width="20" height="20" viewBox="0 0 20 20"><path class="ln" stroke-width="1.5" d="M1 1v14M17 1v5M1 4h16M2 13h9" /><path d="M15 8a4 4 0 012 7v4h-4v-4a4 4 0 012-7z" fill="#6fe0d4"/></svg></button>
                <svg class="chev" width="7" height="12" viewBox="0 0 7 12"><path class="ln" stroke-width="2" d="M6 1L1 6l5 5"/></svg>
                <div class="hscroll"><i class="thumb"></i></div>
                <svg class="chev" width="7" height="12" viewBox="0 0 7 12"><path class="ln" stroke-width="2" d="M1 1l5 5-5 5"/></svg>
            </div>
        </div>
    </main>

    <footer class="status">
        <span class="ready">Ready</span>
        <div class="worksets">
            <svg width="20" height="18" viewBox="0 0 20 18"><path d="M1 4l3-3 4 3 3-3 4 3v7l4 1-7 6-4-4V9L5 6v7l-4-1z"/></svg>
            <svg class="dd" width="8" height="6" viewBox="0 0 8 6"><path class="ln" d="M1 1l3 4 3-4"/></svg>
            <svg width="18" height="18" viewBox="0 0 18 18"><path d="M7 0h11v6h-4l-2 3v3H9v2h4v3H0v-4h4V7h3z"/></svg><span>:0</span>
        </div>
        <div class="design">
            <svg width="20" height="18" viewBox="0 0 20 18"><path d="M0 0h20v18H0z"/><path stroke="#454a58" d="M2 5h2M6 5h12M2 9h2M6 9h12M2 13h2M6 13h12" stroke-width="1.5"/></svg>
            <svg width="20" height="18" viewBox="0 0 20 18"><path d="M3 0h17v15H9l-2 3-1-3H0l3-3z"/><path stroke="#454a58" d="M5 4h12M5 8h12M5 12h12" stroke-width="1.5"/></svg>
            <span>Main Model</span>
            <svg width="8" height="6" viewBox="0 0 8 6"><path class="ln" d="M1 1l3 4 3-4"/></svg>
        </div>
        <div class="selection">
            <button aria-label="Select links"><svg width="20" height="20" viewBox="0 0 20 20"><path class="ln" stroke-width="1.5" d="M7 2H2v5h5M10 2h6v5h-5M5 5h8"/><use href="#pick"/></svg></button>
            <button aria-label="Select underlay"><svg width="20" height="20" viewBox="0 0 20 20"><path d="M0 13l6-3h5v3zM3 7l7-5h9l-8 6z"/><use href="#pick"/></svg></button>
            <button aria-label="Select pinned"><svg width="20" height="20" viewBox="0 0 20 20"><path d="M3 1h9v2h-2v6h3v3H2V9h3V3H3zM6 12h2v6H6z"/><use href="#pick"/></svg></button>
            <button aria-label="Select by face"><svg width="20" height="20" viewBox="0 0 20 20"><path d="M1 4l5-3 9 1v12H6v4H1z"/><use href="#pick"/></svg></button>
            <button aria-label="Drag on selection"><svg width="20" height="20" viewBox="0 0 20 20"><path class="ln" stroke-width="1.5" d="M8 1v14M1 8h13M5 4l3-3 3 3M4 5L1 8l3 3"/><use href="#pick"/></svg></button>
            <button aria-label="Background processes"><svg width="20" height="20" viewBox="0 0 20 20"><circle class="ln" stroke-width="3" stroke-dasharray="3 3" cx="10" cy="10" r="7.5"/></svg></button>
            <button class="funnel" aria-label="Filter"><svg width="20" height="20" viewBox="0 0 20 20"><path d="M0 0h20v3l-7 8v9l-5-2v-7L0 3z"/></svg>:1</button>
        </div>
    </footer>
    <div class="desktop"></div>

    <!-- Edit Assembly window -->
    <form class="dialog" onsubmit="return false">
        <div class="dialog-title">Edit Assembly <button type="button" aria-label="Close"><svg width="13" height="13" viewBox="0 0 13 13"><path class="ln" d="M1 1l11 11M12 1L1 12"/></svg></button></div>
        <div class="dialog-body">
            <div class="summary">
                <dl>
                    <dt>Family:</dt><dd>Basic Wall</dd>
                    <dt>Type:</dt><dd>Wall - Timber Clad</dd>
                    <dt>Total thickness:</dt><dd>0.2020 (Default)</dd>
                    <dt>Resistance (R):</dt><dd>0.0000 (m²·K)/W</dd>
                    <dt>Thermal Mass:</dt><dd>0.00 kJ/(m²·K)</dd>
                </dl>
                <div class="sample"><label for="sample">Sample Height:</label><input type="text" id="sample" value="6.0960"></div>
            </div>

            <fieldset class="layers">
                <legend>Layers</legend>
                <p class="side">EXTERIOR SIDE</p>
                <div class="layer-box">
                    <table>
                        <colgroup><col class="c-num"><col class="c-fn"><col class="c-pri"><col class="c-mat"><col class="c-thk"><col class="c-wrap"><col class="c-str"><col class="c-var"></colgroup>
                        <thead><tr><th></th><th>Function</th><th>Priority</th><th>Material</th><th>Thickness</th><th>Wraps</th><th>Structural Material</th><th>Variable</th></tr></thead>
                        <tbody>
                            <tr><th>1</th><td>Finish 2</td><td>5</td><td class="active">Finishes - Exterio</td><td>0.0220</td><td><input type="checkbox" aria-label="Wraps" checked></td><td class="na"><input type="checkbox" aria-label="Structural" disabled></td><td><input type="checkbox" aria-label="Variable"></td></tr>
                            <tr><th>2</th><td>Finish 1</td><td>4</td><td>Wood - Stud Lay</td><td>0.0250</td><td><input type="checkbox" aria-label="Wraps" checked></td><td class="na"><input type="checkbox" aria-label="Structural" disabled></td><td><input type="checkbox" aria-label="Variable"></td></tr>
                            <tr class="core"><th>3</th><td>Core Boundary</td><td></td><td>Layers Above Wra</td><td>0.0000</td><td></td><td></td><td></td></tr>
                            <tr><th>4</th><td>Structure</td><td>1</td><td>Structure - Timb</td><td>0.0150</td><td class="na"><input type="checkbox" aria-label="Wraps" disabled></td><td><input type="checkbox" aria-label="Structural"></td><td><input type="checkbox" aria-label="Variable"></td></tr>
                            <tr><th>5</th><td>Structure</td><td>1</td><td>Structure - Timb</td><td>0.1120</td><td class="na"><input type="checkbox" aria-label="Wraps" disabled></td><td><input type="checkbox" aria-label="Structural" checked></td><td><input type="checkbox" aria-label="Variable"></td></tr>
                            <tr><th>6</th><td>Structure</td><td>1</td><td>Structure - Timb</td><td>0.0150</td><td class="na"><input type="checkbox" aria-label="Wraps" disabled></td><td><input type="checkbox" aria-label="Structural"></td><td><input type="checkbox" aria-label="Variable"></td></tr>
                            <tr class="core"><th>7</th><td>Core Boundary</td><td></td><td>Layers Below Wra</td><td>0.0000</td><td></td><td></td><td></td></tr>
                            <tr><th>8</th><td>Finish 1</td><td>4</td><td>Finishes - Interio</td><td>0.0130</td><td><input type="checkbox" aria-label="Wraps" checked></td><td class="na"><input type="checkbox" aria-label="Structural" disabled></td><td><input type="checkbox" aria-label="Variable"></td></tr>
                        </tbody>
                    </table>
                    <i class="table-thumb"></i>
                </div>
                <p class="side">INTERIOR SIDE</p>
                <div class="row-buttons">
                    <button type="button">Insert</button>
                    <button type="button">Duplicate</button>
                    <button type="button">Delete</button>
                    <button type="button" disabled>Up</button>
                    <button type="button">Down</button>
                </div>
            </fieldset>

            <fieldset class="wrapping">
                <legend>Default Wrapping</legend>
                <label>At Inserts:<select><option>Both</option></select></label>
                <label>At&nbsp; Ends:<select><option>None</option></select></label>
            </fieldset>

            <fieldset class="vertical">
                <legend>Modify Vertical Structure (Section Preview only)</legend>
                <button type="button" disabled>Modify</button>
                <button type="button" disabled>Merge Regions</button>
                <button type="button" disabled>Sweeps</button>
                <button type="button" disabled>Assign Layers</button>
                <button type="button" disabled>Split Region</button>
                <button type="button" disabled>Reveals</button>
            </fieldset>

            <div class="dialog-actions">
                <button type="submit" class="default">OK</button>
                <button type="button">Cancel</button>
                <button type="button">Help</button>
            </div>
            <button type="button" class="preview">&lt;&lt; Preview</button>
        </div>
        <svg class="grip" width="10" height="10" viewBox="0 0 10 10"><path d="M7 0h2v2H7zM4 4h2v2H4zM7 4h2v2H7zM0 8h2v2H0zM4 8h2v2H4zM7 8h2v2H7z"/></svg>
        <svg class="pointer" width="14" height="22" viewBox="0 0 14 22"><path d="M1 1v17l4-4 3 7 3-1-3-7h5z" fill="#d5d5d8" stroke="#55555b"/></svg>
    </form>
</body>
</html>
```
FILE: styles.css
```css
* {
    box-sizing: border-box;
}

body {
    margin: 0;
    height: 100vh;
    display: flex;
    flex-direction: column;
    font-family: "Open Sans", "Noto Sans", sans-serif;
    font-size: 14px;
    line-height: 20px;
    color: #e3e6ea;
    background-color: #2e333d;
    overflow: hidden;
    position: relative;
}

button {
    font: inherit;
    color: inherit;
    background: none;
    border: 0;
    padding: 0;
    display: flex;
    align-items: center;
    justify-content: center;
}

a {
    color: inherit;
    text-decoration: none;
}

h2, h3, p, ul, dl, dd {
    margin: 0;
    padding: 0;
    font-size: inherit;
    font-weight: normal;
}

svg {
    fill: currentColor;
    flex: none;
}

.ln {
    fill: none;
    stroke: currentColor;
}

.defs {
    position: absolute;
    width: 0;
    height: 0;
}

.caret {
    width: 14px;
    flex: none;
    display: flex;
    justify-content: center;
    color: #e3e6ea;
}

.caret::before {
    content: "";
    border: 4px solid transparent;
    border-top: 5px solid currentColor;
    border-bottom: 0;
}

.caret.none {
    visibility: hidden;
}

/* Title bar */
.titlebar {
    height: 37px;
    flex: none;
    display: flex;
    align-items: center;
    padding: 0 10px 0 5px;
}

.quick {
    display: flex;
    align-items: center;
    margin-left: 2px;
    color: #9a9da3;
}

.qb {
    width: 29px;
    height: 24px;
}

.qb.first {
    margin-left: 7px;
}

.sep {
    width: 8px;
    height: 28px;
    background: linear-gradient(#50555e, #50555e) center / 1px 100% no-repeat;
}

.window-title {
    display: flex;
    gap: 36px;
    margin-left: 184px;
    padding-bottom: 4px;
    white-space: nowrap;
}

.account {
    display: flex;
    align-items: center;
    gap: 8px;
    margin-left: auto;
    color: #dcdfe6;
}

.account .user {
    color: #7f97ee;
    margin-right: 97px;
}

.account .binoculars {
    margin: 0 3px 0 2px;
}

.window-buttons {
    display: flex;
    gap: 15px;
    margin: 2px 0 0 72px;
}

/* Ribbon tabs */
.tabs {
    height: 24px;
    flex: none;
    display: flex;
    align-items: center;
    padding-left: 2px;
    white-space: nowrap;
}

.tabs a {
    height: 24px;
    padding: 2px 11px;
}

.tabs .file {
    background-color: #3a7ba8;
    padding: 2px 16px;
    margin-right: 2px;
}

.tabs .active {
    background-color: #459b1b;
    margin-left: 6px;
    padding: 2px 8px;
}

.minimize {
    margin: 0 4px 0 28px;
    color: #b4b7bd;
}

/* Ribbon */
.ribbon {
    height: 118px;
    flex: none;
    display: flex;
    border-top: 3px solid;
    border-image: linear-gradient(90deg, #565b63 1006px, #4a9b26 1006px) 3;
    background-color: #4b5357;
    border-bottom: 1px solid #2f343a;
}

.panel {
    display: flex;
    flex-direction: column;
    background-color: #454a58;
    border-right: 1px solid #4e5361;
}

.panel h2 {
    height: 26px;
    display: flex;
    align-items: center;
    justify-content: center;
    gap: 8px;
    white-space: nowrap;
}

.panel.olive h2 {
    background-color: #4b5357;
}

.panel-body {
    flex: 1;
    display: flex;
    justify-content: center;
    padding-top: 3px;
    color: #7b808b;
}

.tri {
    border: 5px solid transparent;
    border-top: 6px solid #e3e6ea;
    border-bottom: 0;
}

.big {
    flex-direction: column;
    justify-content: flex-start;
    padding-top: 3px;
    color: #747985;
    line-height: 18px;
}

.big span {
    margin-top: 3px;
}

.big .caret {
    margin-top: 3px;
}

.selected {
    width: 54px;
    background-color: #445768;
    border: 1px solid #4c7088;
}

.p-select { width: 71px; }
.p-props { width: 78px; }
.p-clip { width: 95px; }
.p-geo { width: 166px; }
.p-ctrl { width: 67px; }
.p-modify { width: 286px; }
.p-view { width: 78px; }
.p-measure { width: 67px; }
.p-create { width: 101px; }
.p-mode { width: 102px; }
.p-wall { width: 199px; }

.p-select .panel-body {
    padding-left: 4px;
}

.p-clip .panel-body {
    padding-left: 12px;
}

.p-modify .panel-body {
    padding-left: 2px;
}

.p-measure .panel-body {
    padding-left: 4px;
}

.p-mode .panel-body {
    gap: 4px;
}

.p-wall .big {
    width: 64px;
}

.stack {
    flex-direction: column;
    align-items: center;
    justify-content: flex-start;
    gap: 3px;
}

.stack .lit {
    width: 46px;
    height: 42px;
    background-color: #3c5c70;
    border: 1px solid #4c7088;
}

.small-grid {
    display: grid;
    grid-auto-rows: 29px;
    align-content: start;
}

.small-grid.one {
    grid-template-columns: 30px;
    margin-left: 13px;
}

.small-grid.two {
    grid-template-columns: 30px 30px;
    margin-right: 18px;
}

.small-grid.three {
    grid-template-columns: 30px 30px 30px;
    margin-left: 4px;
}

.with-caret {
    width: 44px;
}

.geo-list {
    flex: 1;
    padding-left: 8px;
}

.geo-list button {
    height: 29px;
    gap: 6px;
    color: #6d727e;
}

.tool-grid {
    display: grid;
    grid-template-columns: repeat(4, 46px);
    grid-auto-rows: 43px;
    align-content: start;
}

.tool-grid.pair {
    grid-template-columns: 46px 46px;
}

.view-grid {
    display: grid;
    grid-template-columns: 42px 30px;
    grid-auto-rows: 29px;
    align-content: start;
}

.measure-list button {
    height: 43px;
    gap: 4px;
}

/* Options bar */
.options {
    height: 32px;
    flex: none;
    padding: 6px 12px;
    background-color: #4b5256;
}

/* Main area */
.main {
    flex: 1;
    display: flex;
    min-height: 0;
}

.palettes {
    width: 484px;
    flex: none;
    display: flex;
    flex-direction: column;
    padding-right: 3px;
    background-color: #454b59;
    border-left: 3px solid #363a48;
    border-right: 1px solid #5a5f6c;
    border-top: 2px solid #5a6066;
    min-height: 0;
}

.palette-title {
    height: 20px;
    flex: none;
    padding-left: 2px;
    background-color: #2e343c;
}

.type-block {
    display: flex;
    align-items: center;
    gap: 5px;
    height: 84px;
    flex: none;
    padding-left: 5px;
    border-top: 1px solid #565b69;
    border-bottom: 1px solid #4f5462;
}

.filter-row {
    display: flex;
    height: 39px;
    flex: none;
    padding: 3px 1px 6px;
}

.filter {
    width: 380px;
    justify-content: space-between;
    padding: 0 6px 0 5px;
    border-bottom: 2px solid #747986;
}

.filter svg {
    color: #8d919b;
}

.edit-type {
    margin-left: 5px;
    gap: 6px;
}

.group-title {
    height: 21px;
    flex: none;
    padding-left: 3px;
    background-color: #2e343c;
    font-weight: bold;
}

.props {
    height: 222px;
    flex: none;
    overflow: hidden;
}

.props table {
    width: 441px;
    height: 237px;
    border-collapse: collapse;
    table-layout: fixed;
}

.props th, .props td {
    padding: 0 3px 0 10px;
    border: 1px solid #50566a;
    border-left: 0;
    font-weight: normal;
    text-align: left;
    line-height: 18px;
    white-space: nowrap;
}

.props th {
    width: 220px;
}

.props td {
    padding-left: 4px;
}

.props .focus {
    outline: 1px solid #a3a7b0;
    outline-offset: -2px;
}

.props .off {
    color: #80858f;
}

.props input {
    appearance: none;
    display: block;
    width: 13px;
    height: 13px;
    margin: 2px 0 0 2px;
    border: 1px solid #757a85;
}

.sort-row {
    height: 32px;
    flex: none;
    display: flex;
    gap: 6px;
    padding: 1px 3px 3px;
    background-color: #363b47;
    border-bottom: 2px solid #575c68;
}

.sort-row button {
    width: 24px;
    height: 26px;
    color: #b9bcc3;
    background-color: #3c414d;
}

.sort-row .on {
    background-color: #357286;
}

.sort-row .apply {
    width: 84px;
    height: 24px;
    margin-left: 300px;
    color: #7f848e;
    border: 1px solid #555a66;
    background: none;
}

.browser-tabs {
    height: 29px;
    flex: none;
    display: flex;
    background-color: #23272b;
    color: #cfd1d6;
}

.browser-tabs button {
    width: 29px;
}

.browser-tabs .on {
    background-color: #454b59;
}

.browser-tabs .link {
    color: #b0867a;
}

.search {
    height: 27px;
    flex: none;
    display: flex;
    align-items: center;
    gap: 10px;
    margin: 11px 0 11px 10px;
    padding-left: 9px;
    background-color: #373c46;
    color: #a5a9b1;
}

.search input {
    flex: 1;
    font: inherit;
    color: inherit;
    background: none;
    border: 0;
    padding: 0;
}

.search input::placeholder {
    color: #858a94;
}

.browser {
    flex: 1;
    display: flex;
    min-height: 0;
    margin-bottom: 2px;
    overflow: hidden;
}

.tree {
    flex: 1;
    list-style: none;
}

.tree li {
    height: 24px;
    display: flex;
    align-items: center;
    position: relative;
}

.tree .root {
    padding-left: 6px;
    gap: 6px;
}

.tree .root svg {
    margin-left: 5px;
}

.minus {
    width: 10px;
    height: 2px;
    background-color: #b9bcc3;
}

.tree .group {
    padding-left: 26px;
    gap: 10px;
}

.tree .leaf {
    padding-left: 65px;
    gap: 5px;
}

/* dashed connectors between tree rows */
.tree .leaf::before, .tree .group::before {
    content: "";
    position: absolute;
    left: 10px;
    top: 0;
    height: 24px;
    border-left: 1px dashed #646975;
}

.tree .group::after {
    content: "";
    position: absolute;
    left: 12px;
    top: 12px;
    width: 10px;
    border-top: 1px dashed #646975;
}

.tree .leaf::after {
    content: "";
    position: absolute;
    left: 30px;
    top: -12px;
    width: 30px;
    height: 24px;
    border-left: 1px dashed #646975;
    border-bottom: 1px dashed #646975;
}

.tree .group + .leaf::after {
    top: 0;
    height: 12px;
}

.tree .current {
    font-weight: bold;
    color: #fff;
    background-color: #3b404b;
}

.browser-scroll {
    width: 21px;
    display: flex;
    align-items: flex-end;
    justify-content: center;
    padding-bottom: 6px;
    background-color: #3a3f4a;
    color: #9296a0;
}

/* Drawing area */
.workspace {
    flex: 1;
    display: flex;
    flex-direction: column;
    min-width: 0;
    padding-left: 3px;
    background-color: #2f3540;
}

.view-tabs {
    height: 27px;
    flex: none;
    display: flex;
    align-items: center;
    justify-content: flex-end;
    padding-right: 7px;
    margin-left: -3px;
    background-color: #4c5262;
    border-top: 2px solid #575d65;
    border-bottom: 1px solid #2a303c;
    color: #b0b3bb;
}

.view-area {
    flex: 1;
    display: flex;
    min-height: 0;
}

.canvas {
    flex: 1;
    position: relative;
    background-color: #eeecef;
    overflow: hidden;
}

.plan {
    width: 100%;
    height: 100%;
    display: block;
    fill: #111;
}

.pl, .grid, .hex {
    fill: none;
    stroke: #1c1c1e;
    stroke-width: 1;
    shape-rendering: crispEdges;
}

.pl.blue {
    stroke: #1d45b0;
    stroke-width: 1.5;
}

.furn {
    fill: #eeecef;
    stroke: #1c1c1e;
    stroke-width: 1.3;
}

.gt, .tags, .notes {
    font-family: "Liberation Sans", Arial, sans-serif;
    fill: #1c1c1e;
}

.gt {
    font-size: 15px;
    text-anchor: middle;
}

.tags {
    font-size: 9px;
    text-anchor: middle;
    fill: #26292d;
}

.notes {
    font-size: 11px;
}

.accel {
    position: absolute;
    top: 24px;
    right: 47px;
    display: flex;
    gap: 5px;
    line-height: 15px;
    color: #6c6b70;
    white-space: nowrap;
}

.accel input {
    appearance: none;
    width: 43px;
    height: 22px;
    margin: 5px 0 0;
    border-radius: 11px;
    background-color: #99979b;
}

.accel input::before {
    content: "";
    display: block;
    width: 14px;
    height: 14px;
    margin: 4px 5px;
    border-radius: 50%;
    background-color: #f3f1f4;
}

.navbar {
    position: absolute;
    top: 2px;
    right: 1px;
    width: 42px;
    height: 140px;
    display: flex;
    flex-direction: column;
    align-items: center;
    border: 2px solid #b3b1b6;
    border-radius: 6px;
    background-color: #e5e3e6;
    color: #8c8b90;
}

.navbar .caret {
    color: #77767b;
}

.navbar hr {
    width: 32px;
    margin: 6px 0 8px;
    border: 0;
    border-top: 1px solid #a9a7ac;
}

.navbar .edge {
    align-self: flex-end;
    margin: 1px 3px;
}

.navbar .wheel {
    margin: 12px 0 6px;
}

.navbar .zoom {
    margin-bottom: 12px;
}

.navbar .caret + .edge {
    margin-top: auto;
    margin-bottom: 3px;
}

.vscroll {
    width: 23px;
    display: flex;
    flex-direction: column;
    align-items: center;
    justify-content: space-between;
    padding: 6px 1px 4px 0;
    background-color: #3b404a;
    border-right: 3px solid #2f3540;
    color: #9296a0;
}

.vscroll .thumb {
    width: 10px;
    height: 20px;
    border-radius: 4px;
    background-color: #85899a;
}

.view-bar {
    height: 23px;
    flex: none;
    display: flex;
    align-items: center;
    background-color: #3b404a;
    border-bottom: 1px solid #2c313b;
    color: #d8dae0;
    padding-right: 22px;
}

.scale {
    width: 95px;
    padding-left: 29px;
    white-space: nowrap;
}

.view-bar button {
    width: 31px;
}

.view-bar .dim {
    color: #a0a3ab;
}

.view-bar .chev {
    margin: 0 6px;
    color: #9296a0;
}

.hscroll {
    flex: 1;
    display: flex;
    justify-content: center;
}

.hscroll .thumb {
    width: 21px;
    height: 10px;
    border-radius: 4px;
    background-color: #85899a;
}

/* Status bar */
.status {
    height: 30px;
    flex: none;
    display: flex;
    align-items: center;
    padding: 1px 106px 0 4px;
    background-color: #454a58;
    color: #8d919b;
}

.ready {
    width: 660px;
    color: #e3e6ea;
}

.worksets, .design, .selection {
    display: flex;
    align-items: center;
}

.worksets .dd {
    margin: 0 16px 0 244px;
}

.worksets span {
    margin-left: 2px;
}

.design {
    gap: 11px;
    margin-left: 28px;
}

.design span {
    margin: 4px 140px 0 4px;
}

.selection {
    margin-left: auto;
}

.selection button {
    width: 31px;
}

.selection .funnel {
    width: 42px;
    gap: 4px;
    color: #c4c7cf;
}

.desktop {
    height: 3px;
    flex: none;
    background: linear-gradient(90deg, #8a6f35, #3f3a42 30%, #6d5e50 60%, #3a3740);
}

/* Edit Assembly dialog */
.dialog {
    position: absolute;
    left: 448px;
    top: 169px;
    width: 742px;
    border-radius: 8px;
    background-color: #e2dfe2;
    color: #242327;
    font-size: 13px;
    line-height: 22px;
    box-shadow: 0 4px 18px rgba(0, 0, 0, 0.3);
    overflow: hidden;
    border-bottom: 1px solid #b5b3b8;
}

.dialog-title {
    height: 36px;
    display: flex;
    align-items: center;
    justify-content: space-between;
    padding: 0 11px 1px 9px;
    background-color: #eae0df;
    color: #848087;
    font-size: 14px;
}

.dialog-body {
    padding: 7px 40px 19px 20px;
}

.summary {
    display: flex;
    justify-content: space-between;
}

.summary dl {
    display: grid;
    grid-template-columns: 125px auto;
    height: 108px;
    align-content: space-between;
    line-height: 20px;
}

.sample {
    display: flex;
    gap: 34px;
    padding-top: 43px;
    align-items: flex-start;
}

.sample input {
    width: 86px;
    height: 26px;
    padding: 0 5px 3px;
    font: inherit;
    color: inherit;
    background-color: #efedf0;
    border: 0;
    border-bottom: 1px solid #8c8a8f;
    border-radius: 2px;
}

fieldset {
    margin: 0;
    padding: 0;
    border: 1px solid #cbc9cd;
    min-width: 0;
}

legend {
    margin-left: 5px;
    padding: 0 5px;
    line-height: 20px;
}

.layers {
    margin-top: 7px;
    padding: 0 11px 9px;
}

.layers legend {
    margin-left: -7px;
}

.side {
    padding-left: 212px;
    line-height: 16px;
}

.layers .side:first-of-type {
    margin-top: -5px;
}

.layers .side:last-of-type {
    margin-top: 5px;
}

.layer-box {
    height: 206px;
    display: flex;
    margin-top: 4px;
    border-top: 1px solid #6a696e;
    border-left: 1px solid #6a696e;
    border-bottom: 1px solid #f3f1f4;
    border-right: 1px solid #f3f1f4;
    overflow: hidden;
}

.layer-box table {
    width: 635px;
    height: 211px;
    flex: none;
    table-layout: fixed;
    border-collapse: collapse;
    font-size: 14px;
    line-height: 18px;
}

.c-num { width: 22px; }
.c-fn { width: 127px; }
.c-pri { width: 58px; }
.c-mat { width: 127px; }
.c-thk { width: 106px; }
.c-wrap { width: 52px; }
.c-str { width: 79px; }
.c-var { width: 64px; }

.layer-box thead th {
    height: 38px;
    padding: 0;
    font-weight: normal;
    color: #39383c;
    border: 1px solid #2b2a2e;
    border-top: 0;
    border-left: 0;
}

.layer-box tbody th {
    padding: 0 2px;
    font-weight: normal;
    text-align: left;
    border: 1px solid #2b2a2e;
    border-left: 0;
}

.layer-box td {
    padding: 0 2px;
    background-color: #efedf0;
    border: 1px dotted #77757a;
    white-space: nowrap;
    overflow: hidden;
}

.layer-box .active {
    outline: 2px solid #1c1b1f;
    outline-offset: -1px;
}

.layer-box .na, .layer-box .core td {
    background-color: #c5c3c6;
}

.layer-box .core td {
    font-weight: 600;
}

.layer-box input {
    appearance: none;
    display: block;
    width: 16px;
    height: 16px;
    margin: 3px 0 0 1px;
    border: 1px solid #7d7b80;
    border-radius: 4px;
    background-color: #ebe9ec;
}

.layer-box input:disabled {
    border-color: #d5d3d6;
    background-color: #dad8db;
}

.layer-box input:checked {
    border-color: #1464ad;
    background-color: #1464ad;
}

.layer-box input:checked::before {
    content: "";
    display: block;
    width: 4px;
    height: 8px;
    margin: 1px 5px;
    border: solid #fff;
    border-width: 0 1px 1px 0;
    transform: rotate(45deg);
}

.table-thumb {
    width: 2px;
    height: 20px;
    margin: 22px 0 0 11px;
    background-color: #88868b;
}

.dialog-body button {
    width: 105px;
    height: 27px;
    background-color: #edebee;
    border: 1px solid #cfcdd1;
    border-bottom-color: #b1afb4;
    border-radius: 4px;
}

.dialog-body button:disabled {
    color: #8f8d92;
    background-color: #e6e4e7;
    border-color: #dddbdf;
}

.row-buttons {
    display: flex;
    gap: 14px;
    margin-top: 4px;
}

.wrapping {
    width: 490px;
    margin-top: 10px;
    padding: 0 10px 9px;
    display: flex;
    gap: 18px;
}

.wrapping legend {
    margin-left: -6px;
}

.wrapping label {
    width: 225px;
    line-height: 21px;
}

.wrapping label + label {
    width: 222px;
}

select {
    display: block;
    width: 100%;
    height: 25px;
    padding: 0 3px;
    appearance: none;
    font: inherit;
    color: inherit;
    border: 1px solid #c4c2c6;
    border-bottom-color: #918f94;
    background: #edebee url("data:image/svg+xml,%3Csvg xmlns='http://www.w3.org/2000/svg' width='10' height='7'%3E%3Cpath d='M1 1l4 5 4-5' fill='none' stroke='%23555'/%3E%3C/svg%3E") right 5px center no-repeat;
}

.vertical {
    width: 490px;
    margin-top: 8px;
    padding: 7px 16px 11px 10px;
    display: grid;
    grid-template-columns: 130px 150px 150px;
    gap: 11px 16px;
}

.vertical legend {
    margin-left: -6px;
}

.dialog-body .vertical button {
    width: 100%;
}

.dialog-actions {
    display: flex;
    justify-content: flex-end;
    gap: 11px;
    margin-top: 8px;
}

.dialog-body .default {
    border: 2px solid #3f7fb8;
}

.dialog-body .preview {
    margin: 31px 0 0 5px;
}

.grip {
    position: absolute;
    right: 2px;
    bottom: 2px;
    color: #a9a7ac;
}

.pointer {
    position: absolute;
    left: 356px;
    top: 242px;
}
```
